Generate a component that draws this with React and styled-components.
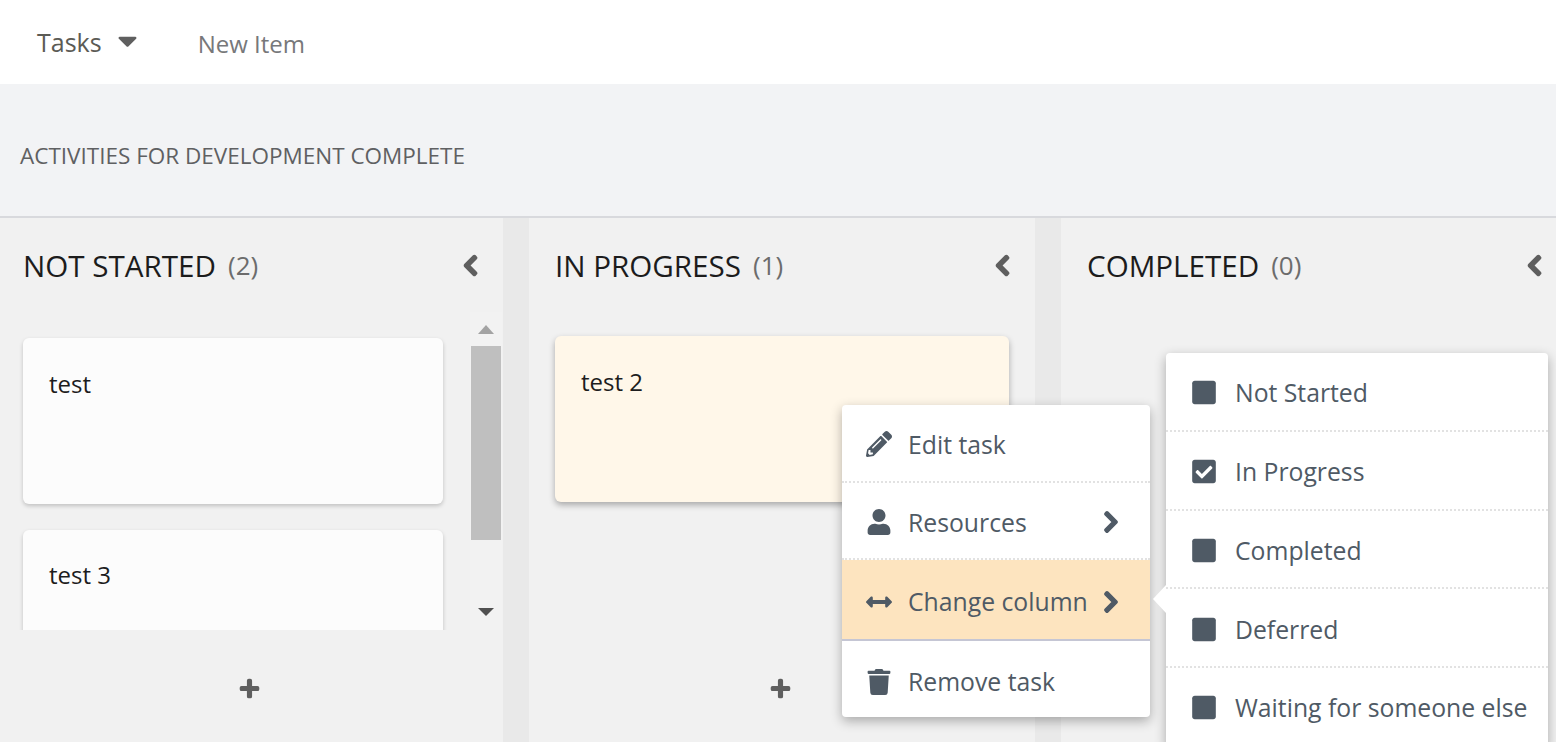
import React from "react";
import styled, { createGlobalStyle } from "styled-components";
import {
  FaCaretDown,
  FaCheckSquare,
  FaChevronLeft,
  FaChevronRight,
  FaArrowsAltH,
  FaPencilAlt,
  FaPlus,
  FaSquare,
  FaTrash,
  FaUser,
} from "react-icons/fa";

const GlobalStyle = createGlobalStyle`
  html, body {
    margin: 0;
    height: 100%;
    overflow: hidden;
    background: #f1f1f1;
    font-family: "Open Sans", "Noto Sans", "Liberation Sans", sans-serif;
  }
`;

const Page = styled.div`
  display: flex;
  flex-direction: column;
  height: 742px;
  overflow: hidden;
`;

const TopBar = styled.div`
  display: flex;
  align-items: center;
  height: 84px;
  background: #fff;
  padding-left: 37px;
`;

const TasksMenu = styled.div`
  display: flex;
  align-items: center;
  font-size: 25px;
  color: #5b5b55;
  margin-top: -1px;
  svg {
    font-size: 31px;
    margin-left: 10px;
    margin-top: -3px;
    color: #5f5f5f;
  }
`;

const NewItem = styled.div`
  margin-left: 55px;
  margin-top: 2px;
  font-size: 24px;
  color: #77787a;
`;

const TitleBand = styled.div`
  display: flex;
  align-items: center;
  height: 134px;
  padding: 10px 0 0 20px;
  box-sizing: border-box;
  background: #f2f3f5;
  border-bottom: 2px solid #d8d9dd;
  font-size: 22.5px;
  color: #5f6062;
`;

const Board = styled.div`
  position: relative;
  display: grid;
  grid-template-columns: 503px 506px 506px;
  column-gap: 26px;
  flex: 1;
  background: #e9e9e9;
`;

const Column = styled.div`
  display: flex;
  flex-direction: column;
  background: #f1f1f1;
  min-width: 0;
`;

const ColumnHeader = styled.div`
  display: flex;
  align-items: center;
  height: 94px;
  padding: 0 21px 0 ${(p) => p.$left}px;
  svg {
    margin-left: auto;
    font-size: 23px;
    color: #5f5f5f;
    stroke: currentColor;
    stroke-width: 40;
  }
`;

const ColumnName = styled.span`
  font-size: 29.6px;
  color: #1c1c1c;
`;

const ColumnCount = styled.span`
  margin-left: 12px;
  font-size: 26px;
  color: #6c6c6c;
`;

const CardArea = styled.div`
  display: flex;
  height: 318px;
  overflow: hidden;
`;

const CardList = styled.div`
  flex: 1;
  min-width: 0;
  display: flex;
  flex-direction: column;
  gap: 26px;
  padding: ${(p) => p.$top}px ${(p) => p.$right}px 0 ${(p) => p.$left}px;
`;

const Card = styled.div`
  flex: none;
  height: 166px;
  box-sizing: border-box;
  padding: ${(p) => p.$textTop}px 26px;
  border-radius: 6px;
  background: ${(p) => p.$bg};
  box-shadow: ${(p) => p.$shadow};
  font-size: 24px;
  line-height: 30px;
  color: #1d1d1d;
`;

const Scrollbar = styled.div`
  display: flex;
  flex-direction: column;
  align-items: center;
  flex: none;
  width: 32px;
  margin-right: 1px;
  background: #f2f2f2;
`;

const ScrollUp = styled.div`
  width: 0;
  height: 0;
  margin-top: 13px;
  border-left: 8px solid transparent;
  border-right: 8px solid transparent;
  border-bottom: 9px solid #a3a3a3;
`;

const ScrollThumb = styled.div`
  width: 30px;
  height: 194px;
  margin-top: 12px;
  background: #bfbfbf;
`;

const ScrollDown = styled.div`
  width: 0;
  height: 0;
  margin-top: 68px;
  border-left: 8px solid transparent;
  border-right: 8px solid transparent;
  border-top: 8px solid #505050;
`;

const AddRow = styled.div`
  display: flex;
  justify-content: center;
  padding: 48px 4px 0 0;
  color: #5f5f5f;
  font-size: 21px;
  svg {
    stroke: currentColor;
    stroke-width: 30;
  }
`;

const Menu = styled.div`
  position: absolute;
  left: ${(p) => p.$left}px;
  top: ${(p) => p.$top}px;
  width: ${(p) => p.$width}px;
  background: #fff;
  border-radius: 4px;
  box-shadow: 0 4px 12px rgba(0, 0, 0, 0.3);
  color: #4f5a65;
  font-size: 24.75px;
`;

const MenuRow = styled.div`
  display: flex;
  align-items: center;
  height: ${(p) => p.$height}px;
  box-sizing: border-box;
  padding: ${(p) => p.$textTop}px 0 0 ${(p) => p.$pad}px;
  background: ${(p) => (p.$active ? "#fde4bf" : "transparent")};
  border-bottom: ${(p) =>
    p.$active
      ? "2px solid #c5c6d4"
      : p.$last
      ? "none"
      : "2px dotted #e2e2e2"};
`;

const RowIcon = styled.span`
  display: flex;
  justify-content: center;
  flex: none;
  width: 26px;
  margin-right: 16px;
  font-size: 26px;
`;

const RowArrow = styled.span`
  display: flex;
  margin-left: auto;
  margin-right: 27px;
  font-size: 24px;
  svg {
    stroke: currentColor;
    stroke-width: 30;
  }
`;

const CheckIcon = styled.span`
  display: flex;
  flex: none;
  width: 26px;
  margin-right: 18px;
  font-size: 27px;
`;

const MenuPointer = styled.div`
  position: absolute;
  left: -13px;
  top: 232px;
  width: 0;
  height: 0;
  border-top: 14px solid transparent;
  border-bottom: 14px solid transparent;
  border-right: 13px solid #fff;
`;

const actions = [
  { label: "Edit task", Icon: FaPencilAlt, height: 78, textTop: 2 },
  { label: "Resources", Icon: FaUser, more: true, height: 77, textTop: 3 },
  { label: "Change column", Icon: FaArrowsAltH, more: true, active: true, height: 81, textTop: 4 },
  { label: "Remove task", Icon: FaTrash, last: true, height: 76, textTop: 5 },
];

const statuses = [
  { label: "Not Started" },
  { label: "In Progress", checked: true },
  { label: "Completed" },
  { label: "Deferred" },
  { label: "Waiting for someone else" },
];

const Header = ({ name, count, left }) => (
  <ColumnHeader $left={left}>
    <ColumnName>{name}</ColumnName>
    <ColumnCount>({count})</ColumnCount>
    <FaChevronLeft />
  </ColumnHeader>
);

const App = () => (
  <Page>
    <GlobalStyle />
    <TopBar>
      <TasksMenu>
        Tasks
        <FaCaretDown />
      </TasksMenu>
      <NewItem>New Item</NewItem>
    </TopBar>
    <TitleBand>ACTIVITIES FOR DEVELOPMENT COMPLETE</TitleBand>
    <Board>
      <Column>
        <Header name="NOT STARTED" count={2} left={23} />
        <CardArea>
          <CardList $top={26} $left={23} $right={27}>
            <Card $bg="#fcfcfc" $textTop={31} $shadow="0 2px 4px rgba(0,0,0,.2)">test</Card>
            <Card $bg="#fcfcfc" $textTop={30} $shadow="0 2px 4px rgba(0,0,0,.2)">test 3</Card>
          </CardList>
          <Scrollbar>
            <ScrollUp />
            <ScrollThumb />
            <ScrollDown />
          </Scrollbar>
        </CardArea>
        <AddRow>
          <FaPlus />
        </AddRow>
      </Column>
      <Column>
        <Header name="IN PROGRESS" count={1} left={26} />
        <CardArea>
          <CardList $top={24} $left={26} $right={26}>
            <Card $bg="#fff7e9" $textTop={31} $shadow="0 3px 6px rgba(0,0,0,.3)">test 2</Card>
          </CardList>
        </CardArea>
        <AddRow>
          <FaPlus />
        </AddRow>
      </Column>
      <Column>
        <Header name="COMPLETED" count={0} left={26} />
      </Column>

      <Menu $left={842} $top={187} $width={308}>
        {actions.map(({ label, Icon, more, active, last, height, textTop }) => (
          <MenuRow key={label} $height={height} $textTop={textTop} $pad={24} $active={active} $last={last}>
            <RowIcon>
              <Icon />
            </RowIcon>
            {label}
            {more && (
              <RowArrow>
                <FaChevronRight />
              </RowArrow>
            )}
          </MenuRow>
        ))}
      </Menu>

      <Menu $left={1166} $top={135} $width={382}>
        <MenuPointer />
        {statuses.map(({ label, checked }) => (
          <MenuRow key={label} $height={78.75} $textTop={3} $pad={25}>
            <CheckIcon>{checked ? <FaCheckSquare /> : <FaSquare />}</CheckIcon>
            {label}
          </MenuRow>
        ))}
      </Menu>
    </Board>
  </Page>
);

export default App;
